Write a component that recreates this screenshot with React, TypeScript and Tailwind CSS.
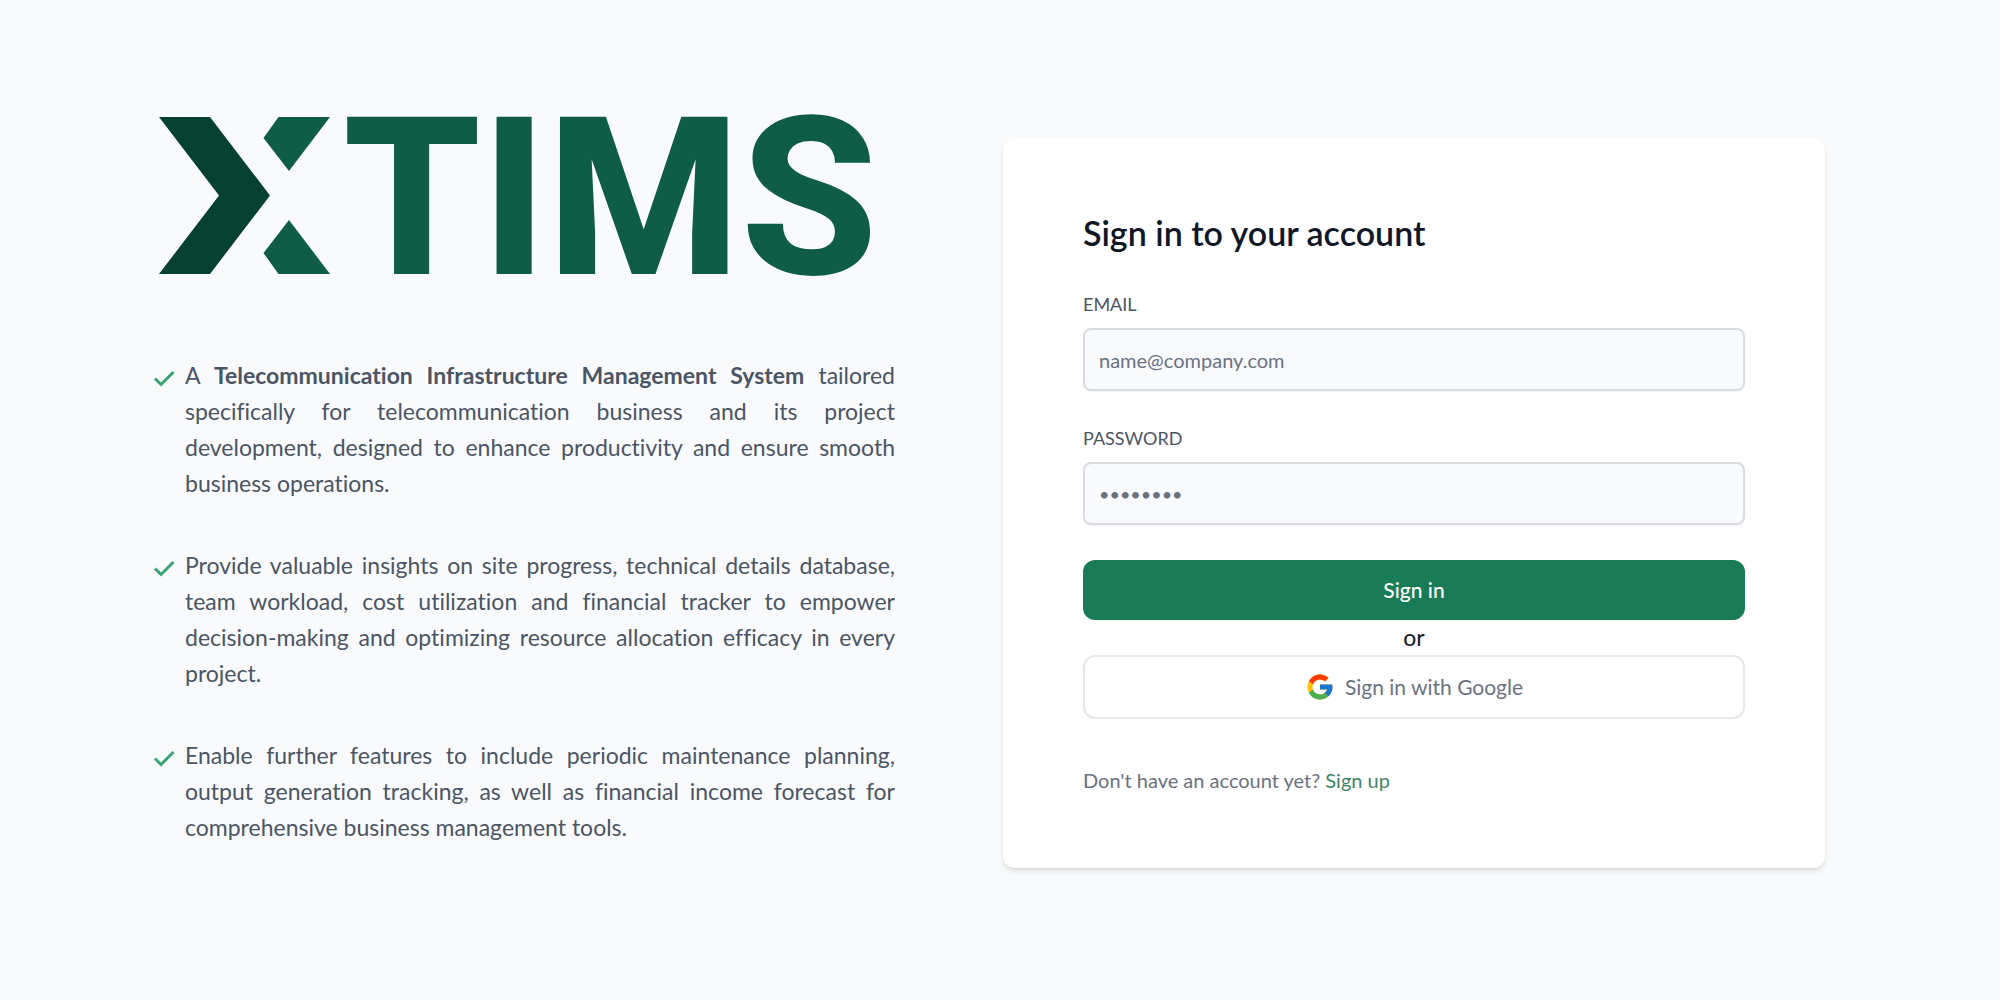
import { FcGoogle } from 'react-icons/fc'

const features = [
  <>
    A <strong className="font-bold">Telecommunication Infrastructure Management System</strong>{' '}
    tailored specifically for telecommunication business and its project development, designed to
    enhance productivity and ensure smooth business operations.
  </>,
  <>
    Provide valuable insights on site progress, technical details database, team workload, cost
    utilization and financial tracker to empower decision-making and optimizing resource allocation
    efficacy in every project.
  </>,
  <>
    Enable further features to include periodic maintenance planning, output generation tracking, as
    well as financial income forecast for comprehensive business management tools.
  </>,
]

const Logo: React.FC = () => (
  <svg viewBox="0 0 742 180" className="w-full overflow-visible" role="img" aria-label="XTIMS">
    <path d="M6 9h51l60 78.500-60 78.500H6l60-78.500z" fill="#064030" />
    <path d="M125.500 9H177l-41 54-25.500-33z" fill="#0f5d46" />
    <path d="M125.500 166H177l-41-54-25.500 33z" fill="#0f5d46" />
    <text
      x="190"
      y="166"
      fill="#0f5d46"
      className="font-['Roboto',sans-serif] text-[221px] font-extrabold"
    >
      TIMS
    </text>
  </svg>
)

const CheckIcon: React.FC = () => (
  <svg viewBox="0 0 24 24" className="mt-2 size-6 shrink-0" fill="none" aria-hidden="true">
    <path d="M2 13.500l6 6L20.500 7" stroke="#38a375" strokeWidth="3" />
  </svg>
)

interface FieldProps {
  id: string
  type: string
  label: string
  placeholder: string
}

const Field: React.FC<FieldProps> = ({ id, type, label, placeholder }) => (
  <div>
    <label htmlFor={id} className="mb-3 block text-lg leading-6 text-gray-600 uppercase">
      {label}
    </label>
    <input
      id={id}
      type={type}
      placeholder={placeholder}
      className="block h-[63px] w-full rounded-lg border-2 border-[#d9dce1] bg-[#f9fafc] px-3.5 text-xl text-gray-900 shadow-xs placeholder:text-gray-500 [&[type=password]]:text-lg"
    />
  </div>
)

const App: React.FC = () => {
  return (
    <main className="grid min-h-screen grid-cols-[742fr_822fr] items-start gap-x-27 bg-[#f9fafc] pt-27 pr-[175px] pb-16 pl-[153px] font-['Lato',sans-serif] text-gray-900 [font-variant-ligatures:no-common-ligatures]">
      <section>
        <Logo />
        <ul className="mt-[69px] space-y-[46px]">
          {features.map((feature, index) => (
            <li key={index} className="flex gap-2">
              <CheckIcon />
              <p className="text-justify text-[23px] leading-9 text-gray-600">{feature}</p>
            </li>
          ))}
        </ul>
      </section>

      <section className="mt-[30px] rounded-xl bg-white px-20 pt-[75px] pb-[74px] shadow-md">
        <h1 className="text-[34px] leading-10 font-semibold">Sign in to your account</h1>
        <form className="mt-[39px] flex flex-col gap-[35px]" onSubmit={e => e.preventDefault()}>
          <Field id="email" type="email" label="Email" placeholder="name@company.com" />
          <Field id="password" type="password" label="Password" placeholder="••••••••" />
          <div>
            <button
              type="submit"
              className="block h-[60px] w-full rounded-xl bg-[#1a7b57] text-[21px] font-medium text-white"
            >
              Sign in
            </button>
            <p className="text-center text-[23px] leading-[35px]">or</p>
            <button
              type="button"
              className="flex h-16 w-full items-center justify-center gap-2.5 rounded-xl border-2 border-gray-200 text-[21px] text-gray-500"
            >
              <FcGoogle className="size-[30px]" />
              Sign in with Google
            </button>
          </div>
        </form>
        <p className="mt-[47px] text-xl text-gray-500">
          Don't have an account yet?{' '}
          <a href="#" className="text-[#3f8468]">
            Sign up
          </a>
        </p>
      </section>
    </main>
  )
}

export default App
